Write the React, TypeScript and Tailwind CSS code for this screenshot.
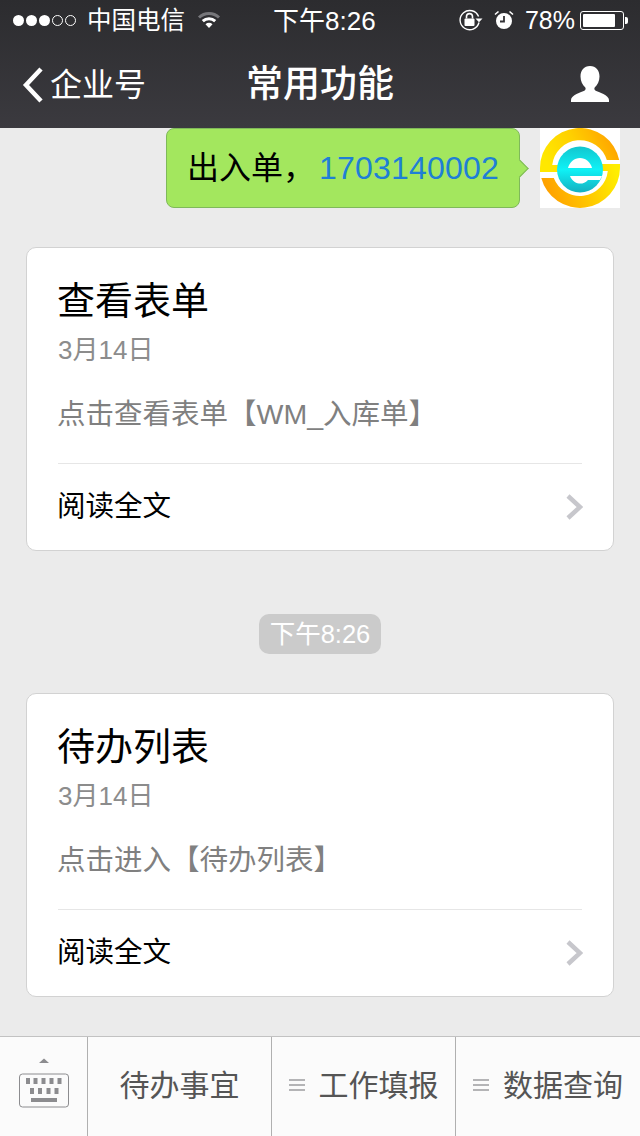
const FONT = "font-['Liberation_Sans','Noto_Sans_CJK_SC',sans-serif]";

function Signal() {
  return (
    <div className="flex items-center gap-[2px]">
      {[1, 1, 1, 0, 0].map((on, i) => (
        <span
          key={i}
          className={
            on
              ? "h-[11px] w-[11px] rounded-full bg-white"
              : "h-[11px] w-[11px] rounded-full border border-white"
          }
        />
      ))}
    </div>
  );
}

function Wifi() {
  return (
    <svg width="26" height="20" viewBox="0 0 26 20" className="ml-[11px]">
      <path d="M3 7.5a14.5 14.5 0 0 1 20 0" fill="none" stroke="#77777b" strokeWidth="3" />
      <path d="M6.8 11.2a9 9 0 0 1 12.4 0" fill="none" stroke="#fff" strokeWidth="3" />
      <path d="M9.5 14.2a5 5 0 0 1 7 0L13 18z" fill="#fff" />
    </svg>
  );
}

function RotationLock() {
  return (
    <svg width="26" height="22" viewBox="0 0 26 22">
      <path d="M21 13.5A9.6 9.6 0 1 1 20.6 7.5" fill="none" stroke="#fff" strokeWidth="1.4" />
      <path d="M17.5 9.5h7l-3.500 3.800z" fill="#fff" />
      <rect x="6.5" y="9.5" width="10" height="7.5" rx="1" fill="#fff" />
      <path d="M8.5 9.5V7.6a3 3 0 0 1 6 0v1.900" fill="none" stroke="#fff" strokeWidth="1.6" />
    </svg>
  );
}

function Alarm() {
  return (
    <svg width="20" height="20" viewBox="0 0 20 20">
      <circle cx="10" cy="11" r="8" fill="#fff" />
      <path d="M10 6v5.500H6" fill="none" stroke="#333236" strokeWidth="1.8" />
      <path d="M1 4.500 4.500 1.500M19 4.500l-3.500-3" stroke="#fff" strokeWidth="1.6" />
    </svg>
  );
}

function Battery() {
  return (
    <div className="ml-[5px] flex items-center">
      <div className="h-[19px] w-[44px] rounded-[3px] border border-white p-[2px]">
        <div className="h-full w-[32px] rounded-[1px] bg-white" />
      </div>
      <div className="ml-[1px] h-[7px] w-[3px] rounded-r-[2px] bg-white" />
    </div>
  );
}

function Person() {
  return (
    <svg width="38" height="36" viewBox="0 0 38 36" className="-mt-[3px]">
      <path
        d="M19 0c6 0 9.500 4.600 9.500 10.500 0 4.400-2 8.500-4.600 10.800-.8.8-.7 2.400.4 3.100 3.500 2 13.700 4.300 13.700 9.600v2H0v-2c0-5.300 10.200-7.600 13.700-9.600 1.100-.7 1.200-2.300.4-3.100C11.500 19 9.500 14.900 9.500 10.500 9.500 4.600 13 0 19 0z"
        fill="#fff"
      />
    </svg>
  );
}

function Logo() {
  return (
    <div className="h-[80px] w-[80px] shrink-0 bg-white">
      <svg width="80" height="80" viewBox="0 0 80 80">
        <defs>
          <linearGradient id="upper" x1="0" y1="0.5" x2="1" y2="0.2">
            <stop offset="0" stopColor="#ffe800" />
            <stop offset="0.45" stopColor="#ffd000" />
            <stop offset="1" stopColor="#ff9c00" />
          </linearGradient>
          <linearGradient id="lower" x1="0" y1="0.6" x2="1" y2="0.4">
            <stop offset="0" stopColor="#ff9c00" />
            <stop offset="0.5" stopColor="#ffc400" />
            <stop offset="1" stopColor="#ffee00" />
          </linearGradient>
          <linearGradient id="ball" x1="0" y1="0" x2="0" y2="1">
            <stop offset="0" stopColor="#12c6cf" />
            <stop offset="0.5" stopColor="#0ff2f6" />
            <stop offset="1" stopColor="#14b0c0" />
          </linearGradient>
        </defs>
        <path
          d="M0 44V40A40 40 0 0 1 79.2 32H66.800A28 28 0 0 0 12.200 37H20V44z"
          fill="url(#upper)"
        />
        <path
          d="M80 36V40A40 40 0 0 1 1.300 50H13.800A28 28 0 0 0 67.800 43H60V36z"
          fill="url(#lower)"
        />
        <circle cx="40" cy="41.500" r="23" fill="url(#ball)" />
        <path d="M28 40c1.500-6 6.500-10 12-10s10.500 4 12 10z" fill="#fff" />
        <path d="M30 48h32l-2 4H48c-3 3-6 4-9 3.500-4-.5-7.500-3.500-9-7.500z" fill="#fff" />
      </svg>
    </div>
  );
}

function Keyboard() {
  return (
    <svg width="52" height="53" viewBox="0 0 52 53">
      <path d="M21 8l5-4.500 5 4.500z" fill="#8c8c8f" />
      <rect x="1.500" y="19" width="49" height="33" rx="3" fill="#fbfbfb" stroke="#8c8c8f" />
      {[8, 15.500, 23.500, 31.500, 39.500].map((x) => (
        <rect key={x} x={x} y="23" width="4" height="6" fill="#8c8c8f" />
      ))}
      {[12, 20, 28.500, 36.500].map((x) => (
        <rect key={x} x={x} y="33" width="4" height="6" fill="#8c8c8f" />
      ))}
      <rect x="13" y="43" width="26" height="4" fill="#8c8c8f" />
    </svg>
  );
}

function Burger() {
  return (
    <div className="mr-[14px] flex w-[16px] flex-col gap-[3px]">
      <span className="h-[2px] bg-[#b4b4b6]" />
      <span className="h-[2px] bg-[#b4b4b6]" />
      <span className="h-[2px] bg-[#b4b4b6]" />
    </div>
  );
}

function Card({ title, body }: { title: string; body: string }) {
  return (
    <div className="mx-[26px] h-[304px] rounded-[10px] border border-[#d2d2d2] bg-white px-[31px]">
      <div className="-ml-[1px] pt-[28px] text-[38px] leading-[50px] text-black">{title}</div>
      <div className="mt-[8px] text-[26px] leading-[32px] text-[#8c8c8c]">3月14日</div>
      <div className="-ml-[1px] mt-[30px] text-[28.5px] leading-[36px] text-[#808080]">{body}</div>
      <div className="mt-[31px] flex h-[86px] items-center justify-between border-t border-[#e6e6e6]">
        <span className="-ml-[1px] text-[28.5px] text-black">阅读全文</span>
        <svg width="18" height="28" viewBox="0 0 18 28" className="-mr-[1px]">
          <path d="M3 3l12 11L3 25" fill="none" stroke="#c7c7cc" strokeWidth="4.500" />
        </svg>
      </div>
    </div>
  );
}

export default function App() {
  return (
    <div className={`flex h-[1136px] w-[640px] flex-col overflow-hidden bg-[#ebebeb] ${FONT}`}>
      <header className="h-[128px] shrink-0 bg-linear-to-b from-[#2c2c2f] to-[#3b3a3f] text-white">
        <div className="relative flex h-[40px] items-center justify-between pl-[13px] pr-[12px]">
          <div className="flex items-center">
            <Signal />
            <span className="ml-[11px] pt-[2px] text-[24.5px] leading-none">中国电信</span>
            <Wifi />
          </div>
          <span className="absolute left-[273px] top-[4px] text-[26px] leading-[34px]">下午8:26</span>
          <div className="flex items-center">
            <RotationLock />
            <span className="ml-[10px]"><Alarm /></span>
            <span className="ml-[11px] pt-[1px] text-[25px] leading-none">78%</span>
            <Battery />
          </div>
        </div>
        <div className="relative flex h-[88px] items-center justify-between pt-[2px] pl-[22px] pr-[31px]">
          <div className="flex items-center">
            <svg width="22" height="36" viewBox="0 0 22 36">
              <path d="M19 2 4 18l15 16" fill="none" stroke="#fff" strokeWidth="4.500" />
            </svg>
            <span className="ml-[6px] text-[32px] leading-none">企业号</span>
          </div>
          <span className="absolute left-[246px] top-[21px] text-[37px] font-medium leading-[48px]">常用功能</span>
          <Person />
        </div>
      </header>

      <main className="min-h-0 flex-1">
        <div className="flex justify-end gap-[20px] pr-[20px]">
          <div className="relative flex h-[80px] items-center rounded-[8px] border border-[#7fb95a] bg-[#a3e75e] pl-[20px] pr-[20px]">
            <span className="text-[32px] text-black">出入单，</span>
            <span className="ml-[4px] text-[32px] tracking-[0.2px] text-[#1f7fd6]">1703140002</span>
            <span className="absolute -right-[7px] top-[33px] h-[13px] w-[13px] rotate-45 border-r border-t border-[#7fb95a] bg-[#a3e75e]" />
          </div>
          <Logo />
        </div>

        <div className="mt-[39px]">
          <Card title="查看表单" body="点击查看表单【WM_入库单】" />
        </div>

        <div className="mt-[63px] flex justify-center">
          <span className="flex h-[40px] w-[122px] items-center justify-center rounded-[10px] bg-[#cbcbcb] text-[25.5px] text-white">
            下午8:26
          </span>
        </div>

        <div className="mt-[39px]">
          <Card title="待办列表" body="点击进入【待办列表】" />
        </div>
      </main>

      <footer className="flex h-[100px] shrink-0 border-t border-[#c2c2c2] bg-[#fbfbfb] text-[30px] text-[#555555]">
        <div className="flex w-[88px] items-start border-r border-[#b0b0b0] pl-[18px] pt-[18px]">
          <Keyboard />
        </div>
        <div className="flex w-[184px] items-center justify-center border-r border-[#b0b0b0] pb-[3px]">
          待办事宜
        </div>
        <div className="flex w-[184px] items-center justify-center border-r border-[#b0b0b0] pb-[3px]">
          <Burger />
          工作填报
        </div>
        <div className="flex flex-1 items-center justify-center pb-[3px]">
          <Burger />
          数据查询
        </div>
      </footer>
    </div>
  );
}
